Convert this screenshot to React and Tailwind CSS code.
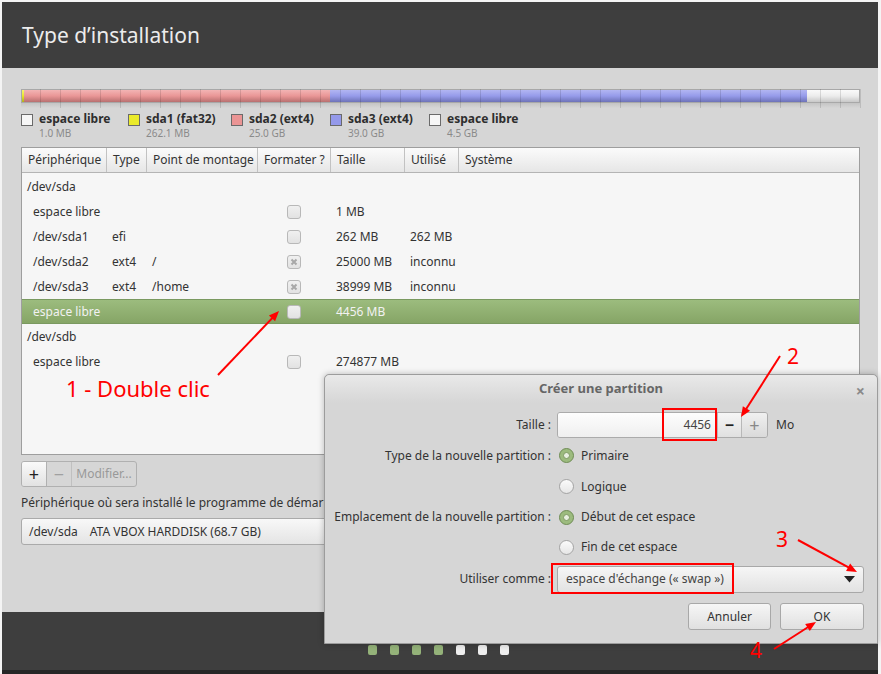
import React from 'react';

const font = { fontFamily: '"Noto Sans", "Open Sans", sans-serif' };

const legend = [
  { label: 'espace libre', size: '1.0 MB', swatch: 'bg-[#f6f6f6]', w: 'w-[107px]' },
  { label: 'sda1 (fat32)', size: '262.1 MB', swatch: 'bg-[#eaea2a]', w: 'w-[103px]' },
  { label: 'sda2 (ext4)', size: '25.0 GB', swatch: 'bg-[#ea9494]', w: 'w-[99px]' },
  { label: 'sda3 (ext4)', size: '39.0 GB', swatch: 'bg-[#9499ea]', w: 'w-[99px]' },
  { label: 'espace libre', size: '4.5 GB', swatch: 'bg-[#f6f6f6]', w: 'w-[100px]' },
];

const rows = [
  { dev: '/dev/sda', top: true },
  { dev: 'espace libre', size: '1 MB', box: 'empty' },
  { dev: '/dev/sda1', type: 'efi', size: '262 MB', used: '262 MB', box: 'empty' },
  { dev: '/dev/sda2', type: 'ext4', mount: '/', size: '25000 MB', used: 'inconnu', box: 'x' },
  { dev: '/dev/sda3', type: 'ext4', mount: '/home', size: '38999 MB', used: 'inconnu', box: 'x' },
  { dev: 'espace libre', size: '4456 MB', box: 'empty', selected: true },
  { dev: '/dev/sdb', top: true },
  { dev: 'espace libre', size: '274877 MB', box: 'empty' },
];

const cols = 'grid grid-cols-[85px_40px_111px_73px_74px_54px_1fr]';

function Check({ kind }) {
  if (!kind) return null;
  return (
    <span className="flex h-[14px] w-[14px] items-center justify-center rounded-[3px] border border-[#b8b8b8] bg-gradient-to-b from-[#f0f0f0] to-[#e2e2e2]">
      {kind === 'x' && (
        <svg width="8" height="8" viewBox="0 0 8 8">
          <path d="M1.5 1.5 L6.5 6.5 M6.5 1.5 L1.5 6.5" stroke="#a8a8a8" strokeWidth="2" />
        </svg>
      )}
    </span>
  );
}

function Radio({ on }) {
  return on ? (
    <span className="flex h-[15px] w-[15px] shrink-0 items-center justify-center rounded-full border border-[#6f8c55] bg-[#9cbb7e]">
      <span className="block h-[7px] w-[7px] rounded-full border border-[#7e9a63] bg-[#e8efe0]" />
    </span>
  ) : (
    <span className="block h-[15px] w-[15px] shrink-0 rounded-full border border-[#a4a4a4] bg-gradient-to-b from-[#fbfbfb] to-[#e6e6e6]" />
  );
}

function Arrow({ x1, y1, x2, y2 }) {
  const a = Math.atan2(y2 - y1, x2 - x1);
  const l = 11;
  const p1 = [x2 - l * Math.cos(a - 0.4), y2 - l * Math.sin(a - 0.4)];
  const p2 = [x2 - l * Math.cos(a + 0.4), y2 - l * Math.sin(a + 0.4)];
  return (
    <g>
      <line x1={x1} y1={y1} x2={x2 - 6 * Math.cos(a)} y2={y2 - 6 * Math.sin(a)} stroke="#ff0000" strokeWidth="2" />
      <polygon points={`${x2},${y2} ${p1[0]},${p1[1]} ${p2[0]},${p2[1]}`} fill="#ff0000" />
    </g>
  );
}

export default function App() {
  return (
    <div className="relative h-[674px] w-[881px] overflow-hidden bg-[#f4f4f4] pl-[2px] pr-[3px] pt-[2px] text-[12px] text-[#333]" style={font}>
      <div className="flex h-[672px] flex-col">
        {/* header */}
        <div className="flex h-[66px] items-center bg-[#3e3e3e] pl-[20px] pt-[2px]">
          <h1 className="text-[21px] text-[#ececec]">Type d’installation</h1>
        </div>

        {/* body */}
        <div className="flex h-[544px] flex-col bg-[#d6d6d6] pl-[19px] pr-[17px] pt-[21px]">
          {/* partition bar */}
          <div className="relative">
            <div className="flex h-[14px] w-[839px] overflow-hidden border border-[#a8a8a8]">
              <div className="w-[2px] bg-gradient-to-b from-[#f6f66a] via-[#e6e62a] to-[#b0b020]" />
              <div className="w-[306px] bg-gradient-to-b from-[#f2b4b4] via-[#e99696] to-[#b87070]" />
              <div className="w-[477px] bg-gradient-to-b from-[#b2b6f2] via-[#969bea] to-[#6e73b8]" />
              <div className="flex-1 bg-gradient-to-b from-[#fafafa] via-[#ececec] to-[#c8c8c8]" />
            </div>
            <div className="absolute inset-0 bg-[repeating-linear-gradient(90deg,transparent_0_19px,rgba(0,0,0,0.12)_19px_20px)]" />
            <div className="h-[5px] w-[839px] bg-gradient-to-b from-[#c4c4c4] to-[#d6d6d6]" />
          </div>

          {/* legend */}
          <div className="mt-[3px] flex">
            {legend.map((item, i) => (
              <div key={i} className={`${item.w} flex gap-[6px]`}>
                <span className={`mt-[3px] h-[12px] w-[12px] border border-[#6a6a6a] ${item.swatch}`} />
                <div className="flex flex-col leading-[15px]">
                  <span className="text-[12px] font-bold text-[#2e2e2e]">{item.label}</span>
                  <span className="text-[10px] text-[#8a8a8a]">{item.size}</span>
                </div>
              </div>
            ))}
          </div>

          {/* table */}
          <div className="mt-[6px] h-[308px] w-[839px] border border-[#9e9e9e] bg-[#f6f6f6]">
            <div className={`${cols} h-[25px] border-b border-[#b4b4b4] bg-gradient-to-b from-[#fbfbfb] to-[#e6e6e6] text-[#333]`}>
              {['Périphérique', 'Type', 'Point de montage', 'Formater ?', 'Taille', 'Utilisé', 'Système'].map((h, i) => (
                <div key={h} className={`flex items-center pl-[6px] ${i < 6 ? 'border-r border-[#c2c2c2]' : ''}`}>{h}</div>
              ))}
            </div>
            <div className="pt-[1px]">
              {rows.map((r, i) => (
                <div
                  key={i}
                  className={`${cols} h-[25px] items-center ${r.selected ? 'border-y border-[#7a9960] bg-gradient-to-b from-[#9cbc7e] to-[#86a566] text-[#f2f2f2]' : ''}`}
                >
                  <div className={r.top ? 'pl-[5px]' : 'pl-[11px]'}>{r.dev}</div>
                  <div className="pl-[5px]">{r.type}</div>
                  <div className="pl-[5px]">{r.mount}</div>
                  <div className="flex justify-center pr-[2px]">
                    <Check kind={r.box} />
                  </div>
                  <div className="pl-[5px]">{r.size}</div>
                  <div className="pl-[5px]">{r.used}</div>
                  <div />
                </div>
              ))}
            </div>
          </div>

          {/* buttons under table */}
          <div className="mt-[6px] flex h-[26px] w-[116px] overflow-hidden rounded-[3px] border border-[#b0b0b0]">
            <div className="flex w-[25px] items-center justify-center border-r border-[#b0b0b0] bg-gradient-to-b from-[#fafafa] to-[#e2e2e2] text-[18px] leading-none text-[#222]">+</div>
            <div className="flex w-[25px] items-center justify-center border-r border-[#c0c0c0] text-[18px] leading-none text-[#a0a0a0]">−</div>
            <div className="flex flex-1 items-center justify-center text-[#999]">Modifier...</div>
          </div>

          <div className="mt-[7px] text-[#333]">Périphérique où sera installé le programme de démarrage :</div>

          <div className="mt-[6px] flex h-[27px] w-[839px] items-center rounded-[3px] border border-[#aaa] bg-gradient-to-b from-[#f8f8f8] to-[#e4e4e4] pl-[7px]">
            <span>/dev/sda</span>
            <span className="ml-[12px]">ATA VBOX HARDDISK (68.7 GB)</span>
          </div>
        </div>

        {/* footer */}
        <div className="flex h-[58px] items-center justify-center bg-[#3e3e3e] pb-[2px] pr-[4px]">
          <div className="mt-[20px] flex gap-[13px]">
            {[0, 1, 2, 3, 4, 5, 6].map((d) => (
              <span key={d} className={`h-[10px] w-[9px] rounded-[2px] ${d < 4 ? 'bg-[#94b279]' : 'bg-[#eeeeee]'}`} />
            ))}
          </div>
        </div>
        <div className="h-[4px] bg-[#262626]" />
      </div>

      {/* dialog */}
      <div className="absolute left-[324px] top-[374px] flex h-[270px] w-[554px] flex-col rounded-t-[5px] border border-[#9c9c9c] bg-[#d6d6d6] shadow-[0_0_6px_rgba(0,0,0,0.25)]">
        <div className="relative flex h-[28px] items-center justify-center rounded-t-[5px] bg-gradient-to-b from-[#e9e9e9] to-[#d6d6d6]">
          <span className="text-[13px] font-bold text-[#666]">Créer une partition</span>
          <span className="absolute right-[12px] top-[4px] text-[16px] font-bold text-[#8a8a8a]">×</span>
        </div>
        <div className="mt-[7px] flex flex-col whitespace-nowrap pl-[11px] pr-[13px]">
          <div className="flex h-[30px] items-center">
            <span className="w-[215px] text-right">Taille :</span>
            <div className="ml-[6px] flex h-[26px] w-[211px] overflow-hidden rounded-[3px] border border-[#ababab]">
              <div className="flex flex-1 items-center justify-end bg-gradient-to-b from-[#fdfdfd] to-[#efefef] pr-[6px] text-[#444]">4456</div>
              <div className="flex w-[24px] items-center justify-center border-l border-[#b8b8b8] bg-gradient-to-b from-[#f6f6f6] to-[#e0e0e0] text-[16px] font-bold leading-none text-[#222]">−</div>
              <div className="flex w-[26px] items-center justify-center border-l border-[#b8b8b8] bg-gradient-to-b from-[#f0f0f0] to-[#dadada] text-[18px] leading-none text-[#888]">+</div>
            </div>
            <span className="ml-[8px]">Mo</span>
          </div>
          <div className="flex h-[31px] items-center">
            <span className="w-[215px] text-right">Type de la nouvelle partition :</span>
            <span className="ml-[8px]"><Radio on /></span>
            <span className="ml-[7px]">Primaire</span>
          </div>
          <div className="flex h-[31px] items-center">
            <span className="w-[215px]" />
            <span className="ml-[8px]"><Radio /></span>
            <span className="ml-[7px]">Logique</span>
          </div>
          <div className="flex h-[30px] items-center">
            <span className="flex w-[215px] justify-end">Emplacement de la nouvelle partition :</span>
            <span className="ml-[8px]"><Radio on /></span>
            <span className="ml-[7px]">Début de cet espace</span>
          </div>
          <div className="flex h-[30px] items-center">
            <span className="w-[215px]" />
            <span className="ml-[8px]"><Radio /></span>
            <span className="ml-[7px]">Fin de cet espace</span>
          </div>
          <div className="mt-[2px] flex h-[30px] items-center">
            <span className="w-[215px] text-right">Utiliser comme :</span>
            <div className="ml-[6px] flex h-[27px] flex-1 items-center justify-between rounded-[3px] border border-[#a8a8a8] bg-gradient-to-b from-[#f6f6f6] to-[#e2e2e2] pl-[8px] pr-[8px] text-[#444]">
              <span>espace d'échange (« swap »)</span>
              <svg width="11" height="7" viewBox="0 0 11 7"><path d="M0 0 H11 L5.5 6.5 Z" fill="#222" /></svg>
            </div>
          </div>
          <div className="mt-[9px] flex justify-end gap-[9px]">
            <div className="flex h-[27px] w-[83px] items-center justify-center rounded-[3px] border border-[#a8a8a8] bg-gradient-to-b from-[#f6f6f6] to-[#e0e0e0]">Annuler</div>
            <div className="flex h-[27px] w-[84px] items-center justify-center rounded-[3px] border border-[#a8a8a8] bg-gradient-to-b from-[#f6f6f6] to-[#e0e0e0]">OK</div>
          </div>
        </div>
      </div>

      {/* annotations */}
      <div className="absolute left-[66px] top-[373px] text-[22px] leading-[30px] text-[#ff0000]">1 - Double clic</div>
      <div className="absolute left-[787px] top-[341px] text-[21px] leading-[30px] text-[#ff0000]">2</div>
      <div className="absolute left-[776px] top-[524px] text-[21px] leading-[30px] text-[#ff0000]">3</div>
      <div className="absolute left-[750px] top-[635px] text-[21px] leading-[30px] text-[#ff0000]">4</div>
      <div className="absolute left-[662px] top-[408px] h-[33px] w-[55px] border-2 border-[#ff0000]" />
      <div className="absolute left-[551px] top-[563px] h-[31px] w-[183px] border-2 border-[#ff0000]" />
      <svg className="pointer-events-none absolute left-0 top-0" width="881" height="674">
        <Arrow x1={218} y1={375} x2={279} y2={311} />
        <Arrow x1={780} y1={356} x2={741} y2={417} />
        <Arrow x1={798} y1={540} x2={857} y2={572} />
        <Arrow x1={774} y1={649} x2={816} y2={622} />
      </svg>
    </div>
  );
}
